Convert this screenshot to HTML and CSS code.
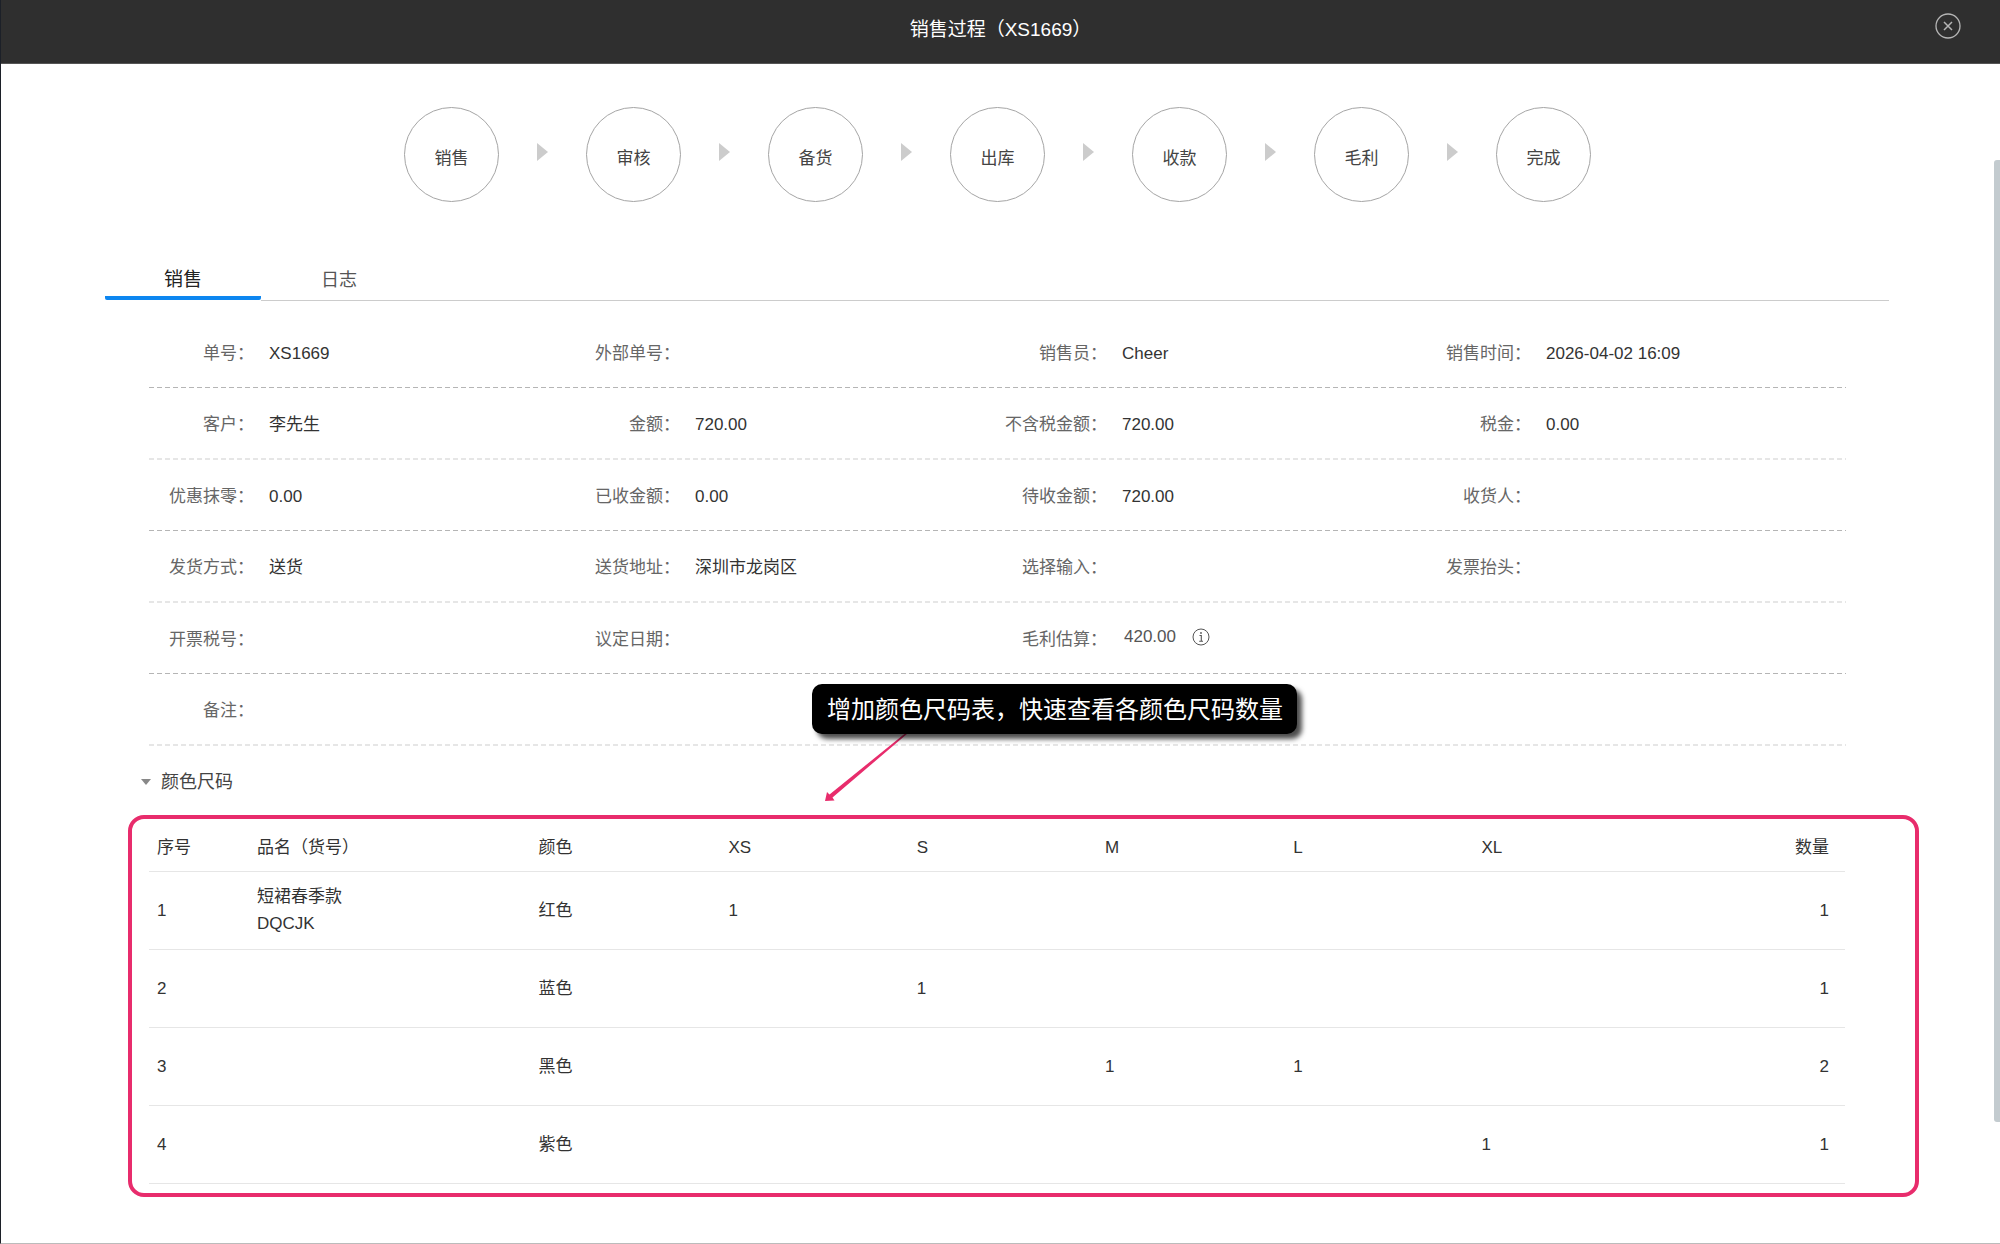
FILE: index.html
```html
<!DOCTYPE html>
<html lang="zh-CN">
<head>
  <meta charset="UTF-8" />
  <meta name="viewport" content="width=device-width, initial-scale=1.0"/>
  <title>销售过程（XS1669）</title>
  <link rel="stylesheet" href="styles.css">
</head>
<body>
  <header class="topbar">
    <h1>销售过程（XS1669）</h1>
    <button class="close" type="button" aria-label="关闭">
      <svg width="26" height="26" viewBox="0 0 26 26" fill="none" stroke="#b5b5b5">
        <circle cx="13" cy="13" r="12" stroke-width="1.3"/>
        <path d="M9 9l8 8M17 9l-8 8" stroke-width="1.5"/>
      </svg>
    </button>
  </header>

  <main>
    <ol class="steps">
      <li>销售</li>
      <li>审核</li>
      <li>备货</li>
      <li>出库</li>
      <li>收款</li>
      <li>毛利</li>
      <li>完成</li>
    </ol>

    <div class="tabs">
      <button class="tab active" type="button">销售</button>
      <button class="tab" type="button">日志</button>
    </div>

    <div class="details">
      <dl class="row">
        <div><dt>单号：</dt><dd>XS1669</dd></div>
        <div><dt>外部单号：</dt><dd></dd></div>
        <div><dt>销售员：</dt><dd>Cheer</dd></div>
        <div><dt>销售时间：</dt><dd>2026-04-02 16:09</dd></div>
      </dl>
      <dl class="row">
        <div><dt>客户：</dt><dd>李先生</dd></div>
        <div><dt>金额：</dt><dd>720.00</dd></div>
        <div><dt>不含税金额：</dt><dd>720.00</dd></div>
        <div><dt>税金：</dt><dd>0.00</dd></div>
      </dl>
      <dl class="row">
        <div><dt>优惠抹零：</dt><dd>0.00</dd></div>
        <div><dt>已收金额：</dt><dd>0.00</dd></div>
        <div><dt>待收金额：</dt><dd>720.00</dd></div>
        <div><dt>收货人：</dt><dd></dd></div>
      </dl>
      <dl class="row">
        <div><dt>发货方式：</dt><dd>送货</dd></div>
        <div><dt>送货地址：</dt><dd>深圳市龙岗区</dd></div>
        <div><dt>选择输入：</dt><dd></dd></div>
        <div><dt>发票抬头：</dt><dd></dd></div>
      </dl>
      <dl class="row">
        <div><dt>开票税号：</dt><dd></dd></div>
        <div><dt>议定日期：</dt><dd></dd></div>
        <div>
          <dt>毛利估算：</dt>
          <dd class="profit">420.00
            <svg width="18" height="18" viewBox="0 0 18 18" fill="none" stroke="#555">
              <circle cx="9" cy="9" r="8"/>
              <path d="M7.5 7.5H9.3V13M7.2 13.2H11" stroke-width="1.1"/>
              <circle cx="9" cy="5" r="0.9" fill="#555" stroke="none"/>
            </svg>
          </dd>
        </div>
      </dl>
      <dl class="row">
        <div><dt>备注：</dt><dd></dd></div>
      </dl>
    </div>

    <section class="sizes">
      <button class="toggle" type="button">颜色尺码</button>

      <div class="frame">
        <table>
          <thead>
            <tr>
              <th class="col-no">序号</th>
              <th class="col-name">品名（货号）</th>
              <th class="col-color">颜色</th>
              <th class="col-size">XS</th>
              <th class="col-size">S</th>
              <th class="col-size">M</th>
              <th class="col-size">L</th>
              <th class="col-size">XL</th>
              <th class="qty">数量</th>
            </tr>
          </thead>
          <tbody>
            <tr><td>1</td><td>短裙春季款<br>DQCJK</td><td>红色</td><td>1</td><td></td><td></td><td></td><td></td><td class="qty">1</td></tr>
            <tr><td>2</td><td></td><td>蓝色</td><td></td><td>1</td><td></td><td></td><td></td><td class="qty">1</td></tr>
            <tr><td>3</td><td></td><td>黑色</td><td></td><td></td><td>1</td><td>1</td><td></td><td class="qty">2</td></tr>
            <tr><td>4</td><td></td><td>紫色</td><td></td><td></td><td></td><td></td><td>1</td><td class="qty">1</td></tr>
          </tbody>
        </table>
      </div>

      <div class="callout">
        <svg class="arrow" width="90" height="74" viewBox="0 0 90 74" fill="#e82c6c">
          <path d="M0 74L2 65L4.500 67.500L88 0L89 1L7.500 70.500L9.500 73.500Z"/>
        </svg>
        <p>增加颜色尺码表，快速查看各颜色尺码数量</p>
      </div>
    </section>
  </main>

  <div class="scroll-thumb"></div>
</body>
</html>
```
FILE: styles.css
```css
* {
  box-sizing: border-box;
}

body {
  font-family: "Century Gothic", "Liberation Sans", "Noto Sans CJK SC", sans-serif;
  font-size: 17px;
  color: #333;
  background: #fff;
  margin: 0;
  min-height: 100vh;
  border-left: 1px solid #1c2028;
  border-bottom: 1px solid #bbb;
  position: relative;
}

button {
  font-family: inherit;
  background: none;
  border: none;
  padding: 0;
  cursor: pointer;
}

.topbar {
  position: relative;
  background: #2f2f2f;
  border-bottom: 1px solid #555;
  padding: 16px 0 19px;
  text-align: center;
}

.topbar h1 {
  margin: 0;
  font-size: 19px;
  line-height: 28px;
  font-weight: normal;
  color: #fff;
}

.close {
  position: absolute;
  top: 13px;
  right: 39px;
  width: 26px;
  height: 26px;
}

.close svg {
  display: block;
}

/* process steps */
.steps {
  display: flex;
  justify-content: center;
  gap: 87px;
  list-style: none;
  margin: 0 6px 0 0;
  padding: 43px 0 58px;
}

.steps li {
  position: relative;
  width: 95px;
  height: 95px;
  padding-top: 8px;
  border: 1px solid #a5a5a5;
  border-radius: 50%;
  line-height: 85px;
  text-align: center;
  color: #444;
}

.steps li + li::before {
  content: "";
  position: absolute;
  left: -50px;
  top: 35px;
  border-left: 11px solid #ccc;
  border-top: 9px solid transparent;
  border-bottom: 9px solid transparent;
}

/* tabs */
.tabs {
  display: flex;
  margin: 0 111px 0 104px;
}

.tabs::after {
  content: "";
  flex: 1;
  border-bottom: 1px solid #ccc;
}

.tab {
  width: 156px;
  height: 41px;
  padding-bottom: 4px;
  font-size: 18px;
  color: #555;
  border-bottom: 1px solid #ccc;
}

.tab.active {
  height: 40px;
  padding-bottom: 2px;
  font-size: 19px;
  color: #222;
  border-bottom: 4px solid #0d86f0;
  border-radius: 2px;
}

/* order details */
.details {
  margin: 16px 154px 0 148px;
}

.row {
  display: grid;
  grid-template-columns: 426fr 427fr 424fr 420fr;
  margin: 0;
  padding: 3px 0 1px;
  background: repeating-linear-gradient(to right, #b5b5b5 0 5px, transparent 5px 8px) bottom / 100% 1px no-repeat;
}

.row:nth-child(even) {
  padding-bottom: 2px;
  background: repeating-linear-gradient(to right, #e6e6e6 0 5px, transparent 5px 8px) bottom / 100% 2px no-repeat;
}

.row div {
  display: flex;
  line-height: 67px;
}

.row dt {
  width: 105px;
  flex: none;
  display: flex;
  justify-content: flex-end;
  white-space: nowrap;
  color: #666;
}

.row dd {
  margin: 0 0 0 15px;
}

.row .profit {
  display: flex;
  align-items: center;
  gap: 16px;
  margin-left: 17px;
  color: #555;
  line-height: 62px;
  height: 62px;
}

/* color and size table */
.sizes {
  position: relative;
  margin: 20px 81px 45px 127px;
}

.toggle {
  display: flex;
  align-items: center;
  gap: 10px;
  margin-left: 13px;
  font-size: 18px;
  line-height: 32px;
  color: #444;
}

.toggle::before {
  content: "";
  border-top: 6px solid #888;
  border-left: 5px solid transparent;
  border-right: 5px solid transparent;
}

.frame {
  margin-top: 17px;
  padding: 0 70px 9px 17px;
  border: 4px solid #e82c6c;
  border-radius: 16px;
}

table {
  width: 100%;
  table-layout: fixed;
  border-collapse: separate;
  border-spacing: 0;
}

th,
td {
  padding: 0 0 0 8px;
  text-align: left;
  font-weight: normal;
  border-bottom: 1px solid #e6e6e6;
}

th {
  height: 53px;
  padding-top: 5px;
  line-height: 27px;
}

td {
  height: 78px;
  padding-bottom: 1px;
  line-height: 27px;
}

.col-no {
  width: 5.9%;
}

.col-name {
  width: 16.6%;
}

.col-color {
  width: 11.2%;
}

.col-size {
  width: 11.1%;
}

.qty {
  text-align: right;
  padding-right: 16px;
}

.callout {
  position: absolute;
  left: 684px;
  top: -82px;
}

.callout p {
  position: relative;
  margin: 0;
  padding: 1px 14px 0 15px;
  font-size: 24px;
  line-height: 49px;
  color: #fff;
  background: #000;
  border-radius: 10px;
  box-shadow: 5px 5px 5px rgba(0, 0, 0, 0.7);
  white-space: nowrap;
}

.arrow {
  position: absolute;
  left: 13px;
  top: 43px;
}

.scroll-thumb {
  position: absolute;
  top: 160px;
  right: 0;
  width: 6px;
  height: 962px;
  background: #c3cbcf;
  border-radius: 3px 0 0 3px;
}
```
